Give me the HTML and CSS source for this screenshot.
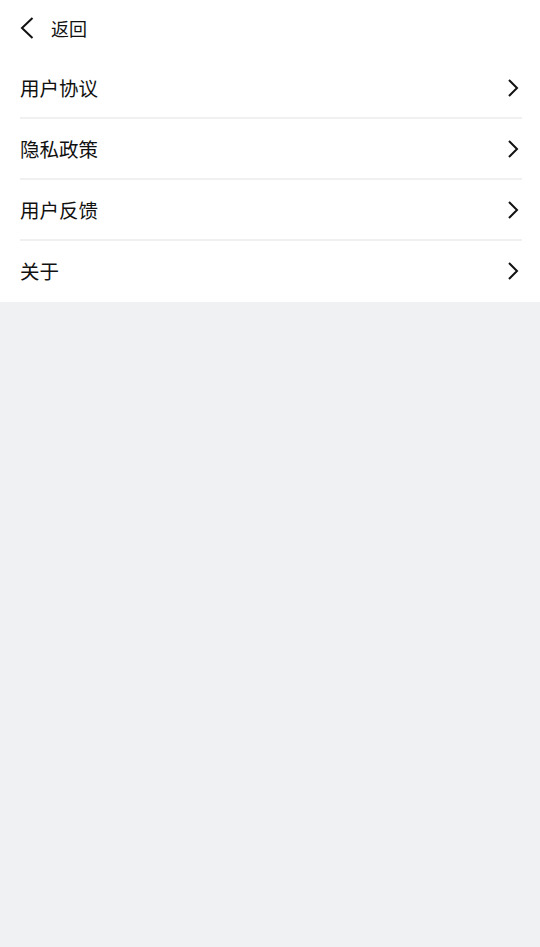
FILE: index.html
```html
<!DOCTYPE html>
<html lang="zh-CN">
<head>
    <meta charset="UTF-8">
    <title>设置</title>
    <link rel="stylesheet" href="styles.css">
</head>
<body>
    <div class="header">
        <svg class="back-icon" width="14" height="24" viewBox="0 0 14 24">
            <path d="M12.5 2 L2 12 L12.5 22" fill="none" stroke="#111" stroke-width="2"/>
        </svg>
        <span class="back-text">返回</span>
    </div>
    <div class="menu">
        <div class="menu-item">
            <span>用户协议</span>
            <svg class="arrow" width="12" height="20" viewBox="0 0 12 20"><path d="M2 2 L10 10 L2 18" fill="none" stroke="#111" stroke-width="2"/></svg>
        </div>
        <div class="menu-item">
            <span>隐私政策</span>
            <svg class="arrow" width="12" height="20" viewBox="0 0 12 20"><path d="M2 2 L10 10 L2 18" fill="none" stroke="#111" stroke-width="2"/></svg>
        </div>
        <div class="menu-item">
            <span>用户反馈</span>
            <svg class="arrow" width="12" height="20" viewBox="0 0 12 20"><path d="M2 2 L10 10 L2 18" fill="none" stroke="#111" stroke-width="2"/></svg>
        </div>
        <div class="menu-item">
            <span>关于</span>
            <svg class="arrow" width="12" height="20" viewBox="0 0 12 20"><path d="M2 2 L10 10 L2 18" fill="none" stroke="#111" stroke-width="2"/></svg>
        </div>
    </div>
</body>
</html>
```

FILE: styles.css
```css
body {
    margin: 0;
    background-color: #f0f1f3;
    font-family: "Noto Sans CJK SC", "Noto Sans", sans-serif;
    color: #111;
}

.header {
    height: 58px;
    box-sizing: border-box;
    display: flex;
    align-items: center;
    padding: 0 0 3px 20px;
    background-color: #fff;
}

.back-text {
    font-size: 18px;
    margin-left: 17px;
}

.menu {
    background-color: #fff;
    padding: 0 18px 0 20px;
}

.menu-item {
    height: 61px;
    box-sizing: border-box;
    display: flex;
    align-items: center;
    justify-content: space-between;
    font-size: 19.5px;
    border-bottom: 2px solid #f0f0f0;
    padding-right: 3px;
}

.menu-item:last-child {
    border-bottom-color: #fff;
}
```
